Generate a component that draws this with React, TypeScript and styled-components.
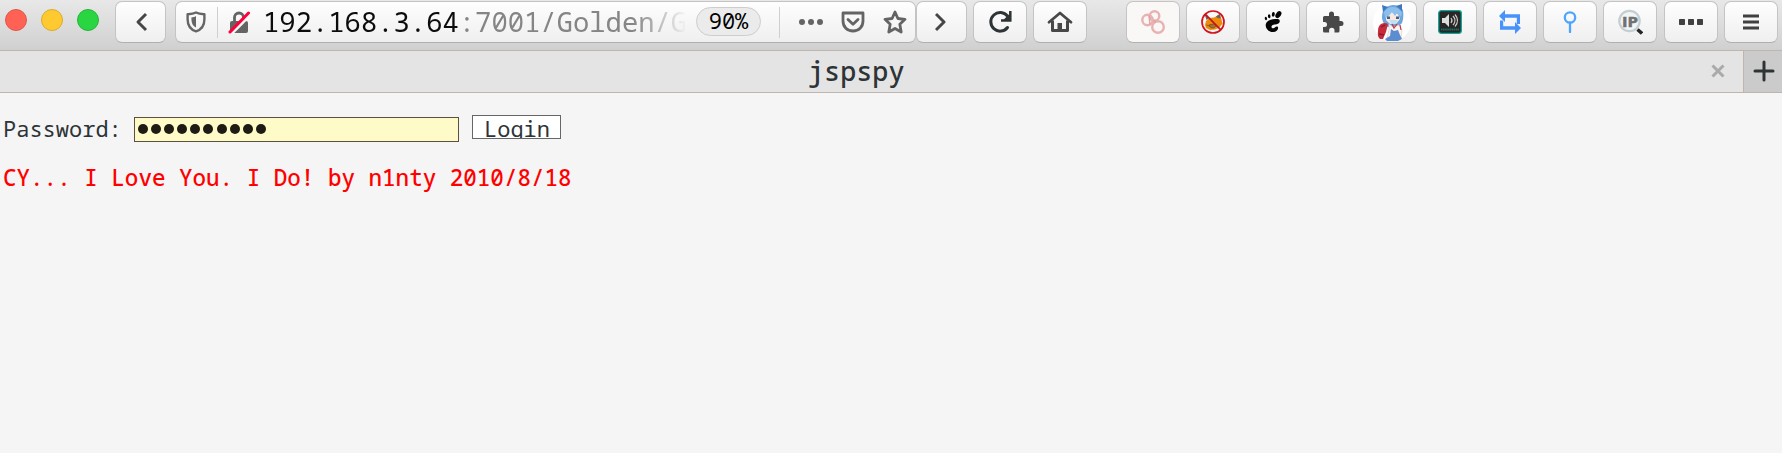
import React from "react";
import styled, { createGlobalStyle } from "styled-components";

const Global = createGlobalStyle`
  * { box-sizing: border-box; }
  body { margin: 0; background: #f5f5f5; font-family: "Noto Sans Mono", "DejaVu Sans Mono", monospace; }
  svg { display: block; flex: none; }
`;

const Window = styled.div`
  width: 1782px;
  height: 453px;
  overflow: hidden;
  background: #f5f5f5;
`;

const Toolbar = styled.header`
  height: 51px;
  display: flex;
  align-items: flex-start;
  padding: 1px 0 0 5px;
  background: linear-gradient(#e8e8e8, #d0d0d0);
  border-bottom: 1px solid #beb6ad;
`;

const Lights = styled.div`
  display: flex;
  gap: 14px;
  padding-top: 8px;
  width: 110px;
`;

const Light = styled.span<{ $fill: string; $edge: string }>`
  width: 22px;
  height: 22px;
  border-radius: 50%;
  background: ${(p) => p.$fill};
  border: 1px solid ${(p) => p.$edge};
`;

const Button = styled.button<{ $w?: number; $gap?: number; $flat?: boolean }>`
  width: ${(p) => p.$w ?? 54}px;
  height: 42px;
  margin: 0 0 0 ${(p) => p.$gap ?? 6}px;
  padding: 0;
  flex: none;
  display: flex;
  align-items: center;
  justify-content: center;
  border: 1px solid #c4c4c4;
  border-bottom: 1.5px solid #b0b0b0;
  border-radius: 7px;
  background: ${(p) => (p.$flat ? "#f9f8f6" : "linear-gradient(#fefefe, #efefef)")};
`;

const AddressBar = styled.div`
  width: 741px;
  height: 42px;
  margin-left: 9px;
  padding-left: 10px;
  flex: none;
  display: flex;
  align-items: center;
  border: 1px solid #c4c4c4;
  border-bottom: 1.5px solid #b0b0b0;
  border-radius: 7px;
  background: linear-gradient(#fefefe, #efefef);
`;

const Divider = styled.span<{ $l: number; $r: number }>`
  width: 1px;
  height: 31px;
  margin: 0 ${(p) => p.$r}px 0 ${(p) => p.$l}px;
  background: #cfcfcf;
`;

const Url = styled.div`
  width: 424px;
  margin-left: 13px;
  overflow: hidden;
  white-space: nowrap;
  font-size: 27.2px;
  line-height: 38px;
  padding-bottom: 1px;
  color: #858585;
  mask-image: linear-gradient(to right, #000 370px, transparent 424px);
  span { color: #0c0c0c; }
`;

const Zoom = styled.span`
  width: 65px;
  height: 29px;
  margin: 0 0 1px 9px;
  border: 1px solid #cdcdcd;
  border-radius: 15px;
  background: #ebebeb;
  color: #000;
  font-size: 22px;
  line-height: 25px;
  text-align: center;
`;

const Actions = styled.div`
  display: flex;
  align-items: center;
  gap: 18px;
`;

const TabStrip = styled.nav`
  height: 42px;
  display: flex;
  background: #e4e4e4;
  border-bottom: 1px solid #beb6ad;
`;

const Tab = styled.div`
  width: 1743px;
  padding: 0 18px 1px 808px;
  display: flex;
  align-items: center;
  justify-content: space-between;
`;

const TabTitle = styled.span`
  color: #2e3436;
  font-size: 26.8px;
  line-height: 38px;
  font-weight: 500;
`;

const NewTab = styled.div`
  width: 39px;
  padding: 0 0 1px 9px;
  display: flex;
  align-items: center;
  background: #cbcbcb;
  border-left: 1px solid #beb6ad;
`;

const Page = styled.main`
  padding: 22px 0 0 3px;
`;

const LoginRow = styled.form`
  height: 30px;
  display: flex;
  align-items: flex-start;
  font-size: 22px;
  color: #2e3436;
`;

const Label = styled.label`
  width: 131px;
  line-height: 26px;
  white-space: pre;
`;

const Field = styled.div`
  width: 325px;
  height: 25px;
  margin: 2px 13px 0 0;
  padding: 0 0 1px 3px;
  display: flex;
  align-items: center;
  gap: 3.1px;
  border: 1px solid #5c5140;
  background: #fffbc8;
`;

const Dot = styled.span`
  width: 10px;
  height: 10px;
  border-radius: 50%;
  background: #1e1b15;
`;

const LoginButton = styled.div`
  width: 89px;
  height: 24px;
  overflow: hidden;
  border: 1px solid #666;
  background: #fff;
  line-height: 25px;
  padding-left: 11px;
`;

const Credit = styled.p`
  margin: 18px 0 0;
  color: #ff0000;
  font-size: 22.57px;
  line-height: 30px;
  font-weight: 500;
  white-space: nowrap;
`;

const Chevron = ({ right }: { right?: boolean }) => (
  <svg width="14" height="20" viewBox="0 0 14 20" fill="none" stroke="#464646" strokeWidth="3" strokeLinejoin="round">
    <path d={right ? "M1 2l8 8-8 8" : "M12 2L4 10l8 8"} />
  </svg>
);

const Shield = () => (
  <svg width="20" height="22" viewBox="0 0 20 22">
    <path d="M10 1.5C7 3.1 4.4 3.1 1.6 3.2v5C1.6 14 4 18.4 10 20.3c6-1.9 8.4-6.3 8.4-12.1v-5C15.6 3.1 13 3.1 10 1.5z" fill="none" stroke="#666" strokeWidth="2.4" strokeLinejoin="round" />
    <path d="M10 5v11.5c-3-1.2-4.6-3.8-4.6-8.4V6.4C7.200 6.300 8.600 6 10 5z" fill="#666" />
  </svg>
);

const BrokenLock = () => (
  <svg width="22" height="23" viewBox="0 0 22 23">
    <path d="M6.500 11V6.500a4.500 4.500 0 0 1 9 0V11" fill="none" stroke="#646464" strokeWidth="2.800" />
    <rect x="2" y="10" width="18" height="12" rx="2" fill="#646464" />
    <path d="M3.500 23L22.500 4" stroke="#f7f7f7" strokeWidth="2.600" />
    <path d="M2 21L20.500 2" stroke="#ff0039" strokeWidth="3" strokeLinecap="round" />
  </svg>
);

const Dots = () => (
  <svg width="24" height="6" viewBox="0 0 24 6" fill="#646464">
    <circle cx="3" cy="3" r="3" /><circle cx="12" cy="3" r="3" /><circle cx="21" cy="3" r="3" />
  </svg>
);

const Pocket = () => (
  <svg width="24" height="22" viewBox="0 0 24 22" fill="none" stroke="#646464" strokeWidth="2.800" strokeLinejoin="round" strokeLinecap="round">
    <path d="M2 2h20v8c0 6-4.300 10-10 10S2 16 2 10z" />
    <path d="M7 8.500l5 4.700 5-4.700" />
  </svg>
);

const Star = () => (
  <svg width="24" height="24" viewBox="0 0 24 24" fill="none" stroke="#646464" strokeWidth="2.800" strokeLinejoin="round">
    <path d="M12 2l2.900 6.500 7.100.8-5.200 4.900 1.400 7.800-6.200-3.500L5.800 22l1.400-7.800L2 9.300l7.100-.8z" />
  </svg>
);

const Reload = () => (
  <svg width="24" height="24" viewBox="0 0 24 24" fill="none" stroke="#2e3436" strokeWidth="3">
    <path d="M19.500 6.200A9.300 9.300 0 1 0 19.500 17.500" strokeLinecap="round" />
    <path d="M22.300 1v9.500H13" strokeWidth="2.500" />
    <path d="M21.800 3.500v6.500h-6.500z" fill="#2e3436" stroke="none" />
  </svg>
);

const Home = () => (
  <svg width="26" height="22" viewBox="0 0 26 22">
    <path d="M2 11.200L13 2l11 9.200" fill="none" stroke="#484848" strokeWidth="2.800" strokeLinecap="round" strokeLinejoin="round" />
    <path d="M5.500 9.500v10h15v-10" fill="none" stroke="#484848" strokeWidth="3" strokeLinejoin="round" />
    <path d="M10.500 12h4.500v7h-4.500z" fill="#484848" />
  </svg>
);

const Rings = () => (
  <svg width="24" height="24" viewBox="0 0 24 24" fill="none" stroke="#e9b2b2" strokeWidth="2.400">
    <circle cx="6.500" cy="10" r="5.200" /><circle cx="13.500" cy="6" r="4.800" /><circle cx="17" cy="17" r="5.800" />
    <path d="M13 10l1.500 3M8 5.500l1 9" stroke="#e3a1a1" strokeWidth="1.500" />
  </svg>
);

const NoFox = () => (
  <svg width="24" height="24" viewBox="0 0 24 24">
    <path d="M5 11l3-3 5-.5 6-3 1.500 5 1 4-3 4-4.500 2-5 .5-4-2L4 15z" fill="#ee8a0b" />
    <path d="M3.500 4l4.500 4-2.500 2zM15 6.500l4-3 .5 5-3-.5z" fill="#6d6257" />
    <path d="M8 15l4.500-1 3 1.500-3 2.500-3-.5zM5.500 15l3 1" fill="#a9702b" stroke="#6b4f2c" strokeWidth=".8" />
    <circle cx="12" cy="12" r="11" fill="none" stroke="#d3121c" strokeWidth="1.700" />
    <path d="M4.200 4.200l15.600 15.600" stroke="#c01522" strokeWidth="1.700" />
  </svg>
);

const Foot = () => (
  <svg width="20" height="22" viewBox="0 0 20 22" fill="#050505">
    <ellipse cx="15.400" cy="3.600" rx="2.500" ry="3.800" transform="rotate(35 15.400 3.600)" />
    <ellipse cx="10.300" cy="3.400" rx="1.500" ry="2.300" transform="rotate(8 10.300 3.400)" />
    <ellipse cx="6.200" cy="5.200" rx="1.300" ry="2" transform="rotate(-8 6.200 5.200)" />
    <ellipse cx="2.900" cy="7.500" rx="1.100" ry="1.700" transform="rotate(-20 2.900 7.500)" />
    <path d="M14.500 8C8.500 7.300 2.700 10 2.700 14.300c0 4 3.800 7 7.500 6.800 3-.2 5.300-2.500 4.900-4.600-.3-1.500-2.200-1.300-3-.2-.8 1.100-2.500 1.500-3.300.4-1-1.500.4-2.700 3-3.100 2.900-.5 5-1.300 5-3.400 0-1.400-.9-2.100-2.300-2.200z" />
  </svg>
);

const Puzzle = () => (
  <svg width="22" height="22" viewBox="0 0 22 22" fill="#484848">
    <path d="M1 6.500a1.500 1.500 0 0 1 1.500-1.500H7V3a2.500 2.500 0 0 1 5 0v2h4a1.500 1.500 0 0 1 1.500 1.500V10H19a2.500 2.500 0 0 1 0 5h-1.500v5a1.500 1.500 0 0 1-1.500 1.500h-3.500v-2a2.700 2.700 0 0 0-5.400 0v2H2.500A1.500 1.500 0 0 1 1 20v-4h1.500a2.500 2.500 0 0 0 0-5H1z" />
  </svg>
);

const Girl = () => (
  <svg width="40" height="38" viewBox="0 0 40 38">
    <circle cx="20" cy="19" r="19" fill="#fff" />
    <path d="M11 8q4-6 10-6t10 5q1 8-1 13l-4 4H15l-4-5q-2-5 0-11z" fill="#6ba6df" />
    <path d="M10 2l6 2-5 5zM30 1l-6 2 6 5z" fill="#3f78c0" />
    <path d="M14 12l5-3 7 2 2 5-4 5h-6l-4-4z" fill="#f6e9e4" />
    <path d="M12 9q3-5 9-5t9 6l-1 4-4-4-2 3-3-4-4 5-3 1z" fill="#8dbfec" />
    <path d="M15 13.500h3v2.500h-3zM24 13.500h3v2.500h-3z" fill="#4a5c80" />
    <path d="M17 17h8l-1 4h-5z" fill="#bfe0f3" />
    <path d="M9 21q4-2 7 0l-2 8-3 7H8q-3-3-2-8 0-5 3-7z" fill="#c52b3b" />
    <path d="M9 24l4-2M7 31l5 1" stroke="#851d2c" strokeWidth="1.300" />
    <path d="M17 21l4 3 6-2 3 5-1 8H15l2-8z" fill="#fbf3ee" stroke="#dcc4bc" strokeWidth=".6" />
    <path d="M19 26l3 2 4-1 2 5 2 4-4 2H15l-2-2 5-3z" fill="#5a8ed1" />
    <path d="M20 21l2 4 3-4M28 22l1 5" fill="none" stroke="#cb3545" strokeWidth="1.200" />
  </svg>
);

const Speaker = () => (
  <svg width="24" height="24" viewBox="0 0 24 24">
    <rect x=".7" y=".7" width="22.600" height="22.600" rx="2.500" fill="#292626" stroke="#14a394" strokeWidth="1.300" />
    <path d="M4 8h3l4-4v13l-4-4H4z" fill="#ddd" />
    <path d="M13 8q2 2.500 0 5M15 6q4 4.500 0 9M17 4.500q5 6 0 12" fill="none" stroke="#ccc" strokeWidth="1.200" />
    <path d="M3 19.500h18" stroke="#137368" strokeWidth="2" strokeDasharray="1.500 .6" />
  </svg>
);

const Repeat = () => (
  <svg width="22" height="24" viewBox="0 0 22 24" fill="#4792fb">
    <path d="M0 6l6-6v4.200h15V14h-3.200V7.700H6V12z" />
    <path d="M22 18l-6 6v-4.200H1V10.500h3.200v5.800H16V12z" />
  </svg>
);

const Pin = () => (
  <svg width="14" height="22" viewBox="0 0 14 22" fill="none" stroke="#4da5ff" strokeWidth="2.300">
    <circle cx="7" cy="6.500" r="5.200" /><path d="M7 11.700V21" strokeLinecap="round" />
  </svg>
);

const IpText = styled.text`
  font: bold 15px "Open Sans", "DejaVu Sans", sans-serif;
`;

const IpSearch = () => (
  <svg width="26" height="26" viewBox="0 0 26 26">
    <circle cx="12.500" cy="12" r="10.200" fill="#f3f5f5" stroke="#c4cfd3" strokeWidth="2.200" />
    <IpText x="5" y="17.500" fill="#6f7173" stroke="#6f7173" strokeWidth=".6" textLength="16" lengthAdjust="spacingAndGlyphs">IP</IpText>
    <path d="M20.500 20.500l4.500 4" stroke="#252525" strokeWidth="3.400" />
  </svg>
);

const Squares = () => (
  <svg width="24" height="6" viewBox="0 0 24 6" fill="#404040">
    <rect width="6" height="6" rx=".7" /><rect x="9" width="6" height="6" rx=".7" /><rect x="18" width="6" height="6" rx=".7" />
  </svg>
);

const Menu = () => (
  <svg width="16" height="16" viewBox="0 0 16 16" stroke="#404040" strokeWidth="2.800">
    <path d="M0 2h16M0 8h16M0 14h16" />
  </svg>
);

export default function App() {
  return (
    <Window>
      <Global />
      <Toolbar>
        <Lights>
          <Light $fill="#ff6254" $edge="#df554b" />
          <Light $fill="#ffca2f" $edge="#dbab2b" />
          <Light $fill="#29d541" $edge="#24b53a" />
        </Lights>
        <Button $w={51} $gap={0}><Chevron /></Button>
        <AddressBar>
          <Shield />
          <Divider $l={11} $r={10} />
          <BrokenLock />
          <Url><span>192.168.3.64</span>:7001/Golden/G</Url>
          <Zoom>90%</Zoom>
          <Divider $l={18} $r={19} />
          <Actions><Dots /><Pocket /><Star /></Actions>
        </AddressBar>
        <Button $w={51} $gap={0}><Chevron right /></Button>
        <Button><Reload /></Button>
        <Button><Home /></Button>
        <Button $gap={39} $flat><Rings /></Button>
        <Button><NoFox /></Button>
        <Button><Foot /></Button>
        <Button><Puzzle /></Button>
        <Button $w={51}><Girl /></Button>
        <Button><Speaker /></Button>
        <Button><Repeat /></Button>
        <Button><Pin /></Button>
        <Button><IpSearch /></Button>
        <Button $gap={7}><Squares /></Button>
        <Button><Menu /></Button>
      </Toolbar>
      <TabStrip>
        <Tab>
          <TabTitle>jspspy</TabTitle>
          <svg width="14" height="14" viewBox="0 0 14 14" stroke="#aaa" strokeWidth="3">
            <path d="M1.500 1.500l11 11M12.500 1.500l-11 11" />
          </svg>
        </Tab>
        <NewTab>
          <svg width="22" height="22" viewBox="0 0 22 22" stroke="#2e3436" strokeWidth="3" strokeLinecap="round">
            <path d="M11 2v18M2 11h18" />
          </svg>
        </NewTab>
      </TabStrip>
      <Page>
        <LoginRow>
          <Label>Password: </Label>
          <Field>{Array.from({ length: 10 }, (_, i) => <Dot key={i} />)}</Field>
          <LoginButton>Login</LoginButton>
        </LoginRow>
        <Credit>CY... I Love You. I Do! by n1nty 2010/8/18</Credit>
      </Page>
    </Window>
  );
}
